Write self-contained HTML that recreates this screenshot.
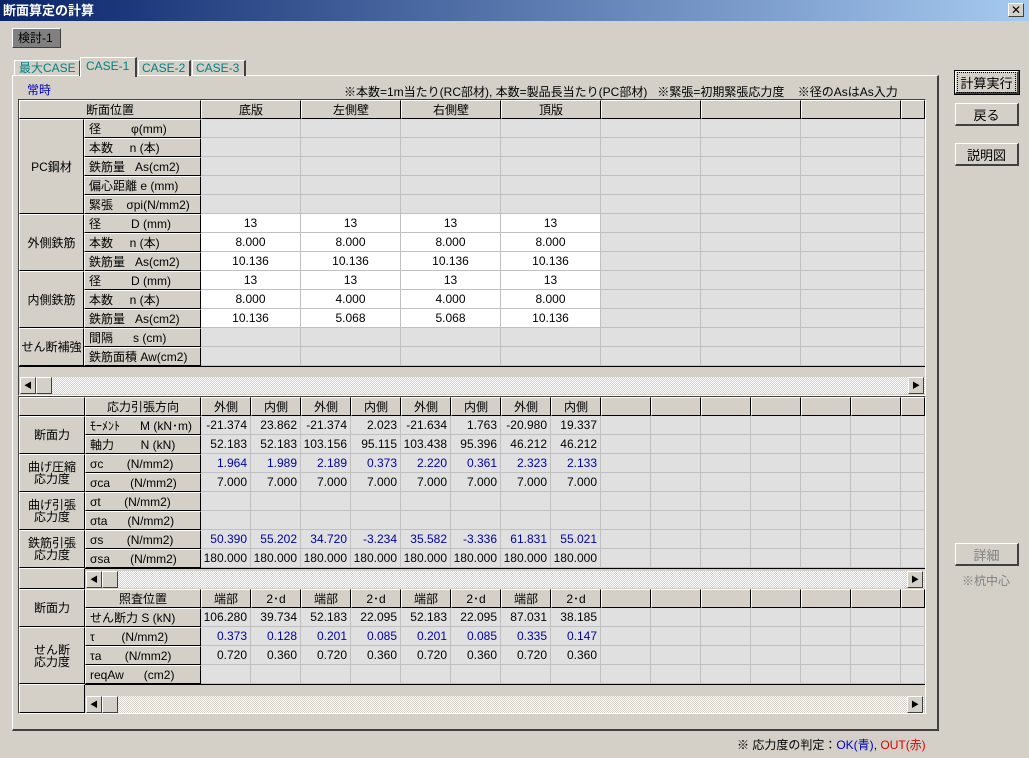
<!DOCTYPE html><html><head><meta charset="utf-8"><style>
*{box-sizing:border-box}
body{margin:0;width:1029px;height:758px;background:#d4d0c8;font:12px "Liberation Sans","Noto Sans CJK JP",sans-serif;position:relative;overflow:hidden;color:#000}
div{position:absolute}
.h{background:#d4d0c8;border-top:1px solid #fff;border-left:1px solid #fff;border-right:1px solid #000;border-bottom:1px solid #000;display:flex;align-items:center;justify-content:center;line-height:12px;text-align:center;white-space:nowrap}
.l{justify-content:flex-start;padding-left:4px}
.d{background:#e0e0e0;border-right:1px solid #c0c0c0;border-bottom:1px solid #c0c0c0;display:flex;align-items:center;justify-content:center;white-space:nowrap}
.w{background:#fff}
.r{justify-content:flex-end;padding-right:3px}
.b{color:#0000a0}
.sb{background:repeating-conic-gradient(#fff 0 25%,#d4d0c8 0 50%) 0 0/2px 2px}
.sbtn{background:#d4d0c8;border-top:1px solid #fff;border-left:1px solid #fff;border-right:1px solid #404040;border-bottom:1px solid #404040;font-size:8px;display:flex;align-items:center;justify-content:center}
.btn{background:#d4d0c8;border-top:1px solid #fff;border-left:1px solid #fff;border-right:2px solid #404040;border-bottom:2px solid #404040;display:flex;align-items:center;justify-content:center;font-size:13px}
</style></head><body>
<div style="left:0;top:0;width:1029px;height:21px;background:linear-gradient(90deg,#0a246a,#a6caf0);color:#fff;font-weight:bold;font-size:13px;line-height:21px;padding-left:3px">断面算定の計算</div>
<div class="sbtn" style="left:1008px;top:3px;width:16px;height:14px;font-size:12px;color:#000">✕</div>
<div style="left:12px;top:28px;width:49px;height:20px;background:#808080;border:1px solid #fff;border-right-color:#404040;border-bottom-color:#404040;line-height:18px;padding-left:5px">検討-1</div>
<div style="left:12px;top:75px;width:927px;height:656px;border:1px solid #fff;border-right:2px solid #404040;border-bottom:2px solid #404040"></div>
<div style="left:14px;top:60px;width:66px;height:16px;border:1px solid #fff;border-bottom:none;border-right-color:#404040;color:#008080;padding-left:4px;line-height:15px">最大CASE</div>
<div style="left:80px;top:57px;width:57px;height:20px;border:1px solid #fff;border-bottom:none;border-right:2px solid #404040;color:#008080;padding-left:5px;line-height:16px;background:#d4d0c8">CASE-1</div>
<div style="left:138px;top:60px;width:53px;height:16px;border:1px solid #fff;border-bottom:none;border-right:2px solid #404040;color:#008080;padding-left:3px;line-height:15px">CASE-2</div>
<div style="left:192px;top:60px;width:54px;height:16px;border:1px solid #fff;border-bottom:none;border-right:2px solid #404040;color:#008080;padding-left:3px;line-height:15px">CASE-3</div>
<div style="left:27px;top:81px;color:#0000c0">常時</div>
<div style="left:344px;top:83px;white-space:nowrap">※本数=1m当たり(RC部材), 本数=製品長当たり(PC部材)&nbsp;&nbsp;&nbsp;※緊張=初期緊張応力度&nbsp;&nbsp;&nbsp;&nbsp;※径のAsはAs入力</div>
<div class="btn" style="left:955px;top:71px;width:64px;height:23px;outline:1px solid #000"><span style="border:1px dotted #000;padding:0 2px">計算実行</span></div>
<div class="btn" style="left:955px;top:103px;width:64px;height:23px">戻る</div>
<div class="btn" style="left:955px;top:143px;width:64px;height:23px">説明図</div>
<div class="btn" style="left:955px;top:543px;width:64px;height:23px;color:#808080">詳細</div>
<div style="left:962px;top:572px;color:#808080">※杭中心</div>
<div style="left:737px;top:736px;white-space:nowrap">※ 応力度の判定：<span style="color:#0000c0">OK(青)</span>, <span style="color:#e00000">OUT(赤)</span></div>
<div id="g"></div>
<script>
var g=document.getElementById('g'),H='';
function c(x,y,w,h,t,cl){H+='<div class="'+cl+'" style="left:'+x+'px;top:'+y+'px;width:'+w+'px;height:'+h+'px">'+(t||'')+'</div>';}
function sb(x,y,w){c(x,y,w,17,'','sb');c(x,y,16,17,'◀','sbtn');c(x+16,y,16,17,'','sbtn');c(x+w-17,y,16,17,'▶','sbtn');}
// grid1 frame
c(18,99,908,297,'','');H+='<div style="left:18px;top:99px;width:908px;height:297px;border:1px solid #404040;border-right-color:#fff;border-bottom-color:#fff"></div>';
c(19,100,182,19,'断面位置','h');
var cols=['底版','左側壁','右側壁','頂版','','','',''];
for(var i=0;i<8;i++)c(201+i*100,100,i==7?24:100,19,cols[i],'h');
var lab=['径&nbsp;&nbsp;&nbsp;&nbsp;&nbsp;&nbsp;&nbsp;&nbsp;&nbsp;φ(mm)','本数&nbsp;&nbsp;&nbsp;&nbsp;&nbsp;n (本)','鉄筋量&nbsp;&nbsp;&nbsp;As(cm2)','偏心距離 e (mm)','緊張&nbsp;&nbsp;&nbsp;&nbsp;σpi(N/mm2)','径&nbsp;&nbsp;&nbsp;&nbsp;&nbsp;&nbsp;&nbsp;&nbsp;&nbsp;D (mm)','本数&nbsp;&nbsp;&nbsp;&nbsp;&nbsp;n (本)','鉄筋量&nbsp;&nbsp;&nbsp;As(cm2)','径&nbsp;&nbsp;&nbsp;&nbsp;&nbsp;&nbsp;&nbsp;&nbsp;&nbsp;D (mm)','本数&nbsp;&nbsp;&nbsp;&nbsp;&nbsp;n (本)','鉄筋量&nbsp;&nbsp;&nbsp;As(cm2)','間隔&nbsp;&nbsp;&nbsp;&nbsp;&nbsp;&nbsp;s (cm)','鉄筋面積 Aw(cm2)'];
var grp=[['PC鋼材',5],['外側鉄筋',3],['内側鉄筋',3],['せん断補強',2]],y=119;
grp.forEach(function(a){c(19,y,65,a[1]*19,a[0],'h');y+=a[1]*19;});
var v1=[null,null,null,null,null,['13','13','13','13'],['8.000','8.000','8.000','8.000'],['10.136','10.136','10.136','10.136'],['13','13','13','13'],['8.000','4.000','4.000','8.000'],['10.136','5.068','5.068','10.136'],null,null];
for(var r=0;r<13;r++){var yy=119+r*19;c(84,yy,117,19,lab[r],'h l');for(var i=0;i<8;i++){var w=v1[r]&&i<4;c(201+i*100,yy,i==7?24:100,19,w?v1[r][i]:'','d'+(w?' w':''));}}
H+='<div style="left:19px;top:366px;width:906px;height:1px;background:#000"></div>';
sb(20,377,905);
// grid2/3
H+='<div style="left:18px;top:396px;width:908px;height:318px;border:1px solid #404040;border-right-color:#fff;border-bottom-color:#fff"></div>';
c(19,397,66,19,'','h');
[['断面力',2],['曲げ圧縮<br>応力度',2],['曲げ引張<br>応力度',2],['鉄筋引張<br>応力度',2]].forEach(function(a,k){c(19,416+k*38,66,38,a[0],'h');});
c(19,568,66,21,'','h');c(19,589,66,38,'断面力','h');c(19,627,66,57,'せん断<br>応力度','h');c(19,684,66,29,'','h');
c(85,397,116,19,'応力引張方向','h');
var h2=['外側','内側','外側','内側','外側','内側','外側','内側','','','','','','',''];
for(var i=0;i<15;i++)c(201+i*50,397,i==14?24:50,19,h2[i],'h');
var lab2=['ﾓｰﾒﾝﾄ&nbsp;&nbsp;&nbsp;&nbsp;&nbsp;&nbsp;M (kN･m)','軸力&nbsp;&nbsp;&nbsp;&nbsp;&nbsp;&nbsp;&nbsp;&nbsp;N (kN)','σc&nbsp;&nbsp;&nbsp;&nbsp;&nbsp;&nbsp;&nbsp;(N/mm2)','σca&nbsp;&nbsp;&nbsp;&nbsp;&nbsp;&nbsp;(N/mm2)','σt&nbsp;&nbsp;&nbsp;&nbsp;&nbsp;&nbsp;&nbsp;(N/mm2)','σta&nbsp;&nbsp;&nbsp;&nbsp;&nbsp;&nbsp;(N/mm2)','σs&nbsp;&nbsp;&nbsp;&nbsp;&nbsp;&nbsp;&nbsp;(N/mm2)','σsa&nbsp;&nbsp;&nbsp;&nbsp;&nbsp;&nbsp;(N/mm2)'];
var v2=[['-21.374','23.862','-21.374','2.023','-21.634','1.763','-20.980','19.337'],['52.183','52.183','103.156','95.115','103.438','95.396','46.212','46.212'],['1.964','1.989','2.189','0.373','2.220','0.361','2.323','2.133'],['7.000','7.000','7.000','7.000','7.000','7.000','7.000','7.000'],[],[],['50.390','55.202','34.720','-3.234','35.582','-3.336','61.831','55.021'],['180.000','180.000','180.000','180.000','180.000','180.000','180.000','180.000']];
var blue2=[2,6];
for(var r=0;r<8;r++){var yy=416+r*19;c(85,yy,116,19,lab2[r],'h l');for(var i=0;i<15;i++)c(201+i*50,yy,i==14?24:50,19,v2[r][i]||'','d r'+(blue2.indexOf(r)>=0?' b':''));}
H+='<div style="left:85px;top:568px;width:840px;height:1px;background:#000"></div>';
sb(86,571,838);
c(85,589,116,19,'照査位置','h');
var h3=['端部','2･d','端部','2･d','端部','2･d','端部','2･d','','','','','','',''];
for(var i=0;i<15;i++)c(201+i*50,589,i==14?24:50,19,h3[i],'h');
var lab3=['せん断力 S (kN)','τ&nbsp;&nbsp;&nbsp;&nbsp;&nbsp;&nbsp;&nbsp;&nbsp;(N/mm2)','τa&nbsp;&nbsp;&nbsp;&nbsp;&nbsp;&nbsp;&nbsp;(N/mm2)','reqAw&nbsp;&nbsp;&nbsp;&nbsp;&nbsp;&nbsp;(cm2)'];
var v3=[['106.280','39.734','52.183','22.095','52.183','22.095','87.031','38.185'],['0.373','0.128','0.201','0.085','0.201','0.085','0.335','0.147'],['0.720','0.360','0.720','0.360','0.720','0.360','0.720','0.360'],[]];
for(var r=0;r<4;r++){var yy=608+r*19;c(85,yy,116,19,lab3[r],'h l');for(var i=0;i<15;i++)c(201+i*50,yy,i==14?24:50,19,v3[r][i]||'','d r'+(r==1?' b':''));}
H+='<div style="left:85px;top:684px;width:840px;height:1px;background:#000"></div>';
sb(86,696,838);
g.innerHTML=H;
</script>
</body></html>
